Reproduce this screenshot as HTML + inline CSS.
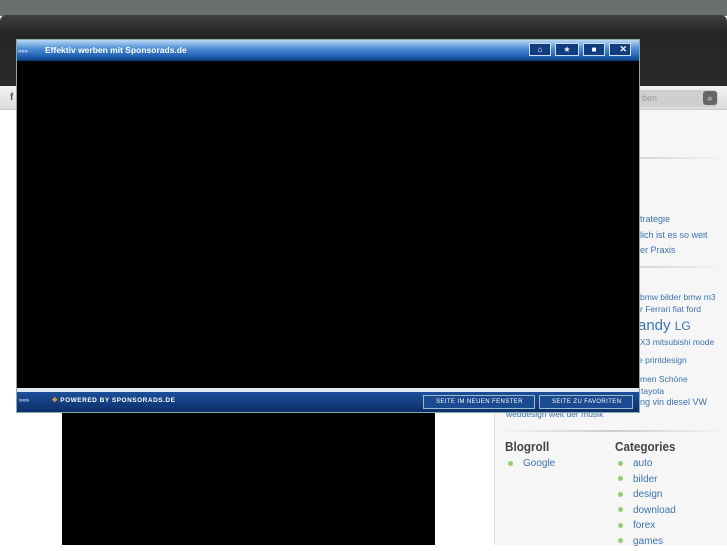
<!DOCTYPE html>
<html><head><style>
*{margin:0;padding:0;box-sizing:border-box}
body{width:727px;height:545px;overflow:hidden;background:#fff;font-family:"Liberation Sans",sans-serif;position:relative}
.a{position:absolute}
.lk{color:#3d72b0;font-size:9px;white-space:nowrap}
.dot{display:inline-block;width:5px;height:5px;border-radius:50%;background:#9ac97a;margin-right:10px;vertical-align:middle}
.li{font-size:10px;color:#3d72b0;height:15.5px}
</style></head><body>
<div class="a" style="left:0;top:0;width:727px;height:16px;background:#6b6e6f"></div>
<div class="a" style="left:0;top:15px;width:727px;height:71px;background:linear-gradient(#404040,#262626 25%,#2a2a2a);border-radius:6px 6px 0 0"></div>
<div class="a" style="left:0;top:86px;width:727px;height:24px;background:linear-gradient(#f2f2f2,#dcdcdc);border-bottom:1px solid #ccc"></div>
<div class="a" style="left:10px;top:92px;font-size:10px;color:#555;font-weight:bold">f</div>
<div class="a" style="left:630px;top:90px;width:88px;height:17px;background:#cfcfcf;border-radius:4px"></div>
<div class="a" style="left:642px;top:93px;font-size:9px;color:#999">ben</div>
<div class="a" style="left:703px;top:91px;width:14px;height:14px;background:#666;border-radius:3px;color:#fff;font-size:9px;text-align:center;line-height:14px">⌕</div>
<div class="a" style="left:494px;top:110px;width:233px;height:435px;background:#f6f6f6;border-left:1px solid #e2e2e2"></div>
<div class="a" style="left:500px;top:157px;width:227px;height:2px;background:linear-gradient(90deg,#f6f6f6,#ccc,#f6f6f6)"></div>
<div class="a" style="left:500px;top:266px;width:227px;height:2px;background:linear-gradient(90deg,#f6f6f6,#ccc,#f6f6f6)"></div>
<div class="a" style="left:500px;top:430px;width:227px;height:2px;background:linear-gradient(90deg,#f6f6f6,#ccc,#f6f6f6)"></div>
<div class="a lk" style="left:640px;top:214px">trategie</div>
<div class="a lk" style="left:640px;top:230px">lich ist es so weit</div>
<div class="a lk" style="left:640px;top:245px">er Praxis</div>
<div class="a lk" style="left:640px;top:292px;font-size:8.5px">bmw bilder bmw m3</div>
<div class="a lk" style="left:640px;top:304px;font-size:8.5px">r Ferrari fiat ford</div>
<div class="a lk" style="left:638px;top:317px;font-size:15px">andy <span style="font-size:12px">LG</span></div>
<div class="a lk" style="left:640px;top:337px;font-size:8.5px">X3 mitsubishi mode</div>
<div class="a lk" style="left:638px;top:355px;font-size:8.5px">e printdesign</div>
<div class="a lk" style="left:640px;top:374px;font-size:8.5px">men Schöne</div>
<div class="a lk" style="left:641px;top:386px;font-size:8.5px">tayota</div>
<div class="a lk" style="left:640px;top:397px;font-size:9px">ng vin diesel VW</div>
<div class="a lk" style="left:506px;top:409px;font-size:8.5px">webdesign welt der musik</div>
<div class="a" style="left:505px;top:439px;font-size:13px;color:#444;font-weight:bold;transform:scaleX(.9);transform-origin:left">Blogroll</div>
<div class="a" style="left:615px;top:439px;font-size:13px;color:#444;font-weight:bold;transform:scaleX(.9);transform-origin:left">Categories</div>
<div class="a" style="left:508px;top:458px"><div class="li"><span class="dot"></span>Google</div></div>
<div class="a" style="left:618px;top:458px">
<div class="li"><span class="dot"></span>auto</div><div class="li"><span class="dot"></span>bilder</div><div class="li"><span class="dot"></span>design</div><div class="li"><span class="dot"></span>download</div><div class="li"><span class="dot"></span>forex</div><div class="li"><span class="dot"></span>games</div></div>
<div class="a" style="left:62px;top:405px;width:373px;height:140px;background:#000"></div>
<div class="a" style="left:16px;top:39px;width:624px;height:374px;background:#0a2a5a;border:1px solid #8aa"></div>
<div class="a" style="left:17px;top:40px;width:622px;height:21px;background:linear-gradient(#bcd8f5,#4f8fd6 40%,#1d5db0 80%,#103a7a)"></div>
<div class="a" style="left:18px;top:49px;font-size:6px;color:#fff">»»»</div>
<div class="a" style="left:45px;top:45px;font-size:8.5px;color:#fff;font-weight:bold">Effektiv werben mit Sponsorads.de</div>
<div class="a" style="left:529px;top:43px;width:22px;height:13px;border:1px solid #cde;background:#123c80;color:#fff;font-size:8px;text-align:center;line-height:11px">⌂</div>
<div class="a" style="left:555px;top:43px;width:24px;height:13px;border:1px solid #cde;background:#123c80;color:#fff;font-size:8px;text-align:center;line-height:11px">★</div>
<div class="a" style="left:583px;top:43px;width:22px;height:13px;border:1px solid #cde;background:#123c80;color:#fff;font-size:8px;text-align:center;line-height:11px">■</div>
<div class="a" style="left:609px;top:43px;width:22px;height:13px;border:1px solid #cde;background:#123c80;color:#fff;font-size:9px;text-align:right;padding-right:3px;line-height:11px;font-weight:bold">✕</div>
<div class="a" style="left:17px;top:61px;width:622px;height:327px;background:#000"></div>
<div class="a" style="left:17px;top:388px;width:622px;height:4px;background:#dfe8f2"></div>
<div class="a" style="left:17px;top:392px;width:622px;height:20px;background:linear-gradient(#1d4f9a,#0d2f6a)"></div>
<div class="a" style="left:19px;top:398px;font-size:6px;color:#fff">»»»</div>
<div class="a" style="left:52px;top:396px;font-size:6.5px;color:#fff;font-weight:bold;letter-spacing:.5px"><span style="color:#e9a23a">✥</span> POWERED BY SPONSORADS.DE</div>
<div class="a" style="left:423px;top:395px;width:112px;height:14px;border:1px solid #9bc;background:#1a4a90;color:#fff;font-size:6px;line-height:12px;padding-left:12px;letter-spacing:.4px">SEITE IM NEUEN FENSTER</div>
<div class="a" style="left:539px;top:395px;width:94px;height:14px;border:1px solid #9bc;background:#1a4a90;color:#fff;font-size:6px;line-height:12px;padding-left:12px;letter-spacing:.4px">SEITE ZU FAVORITEN</div>
</body></html>
